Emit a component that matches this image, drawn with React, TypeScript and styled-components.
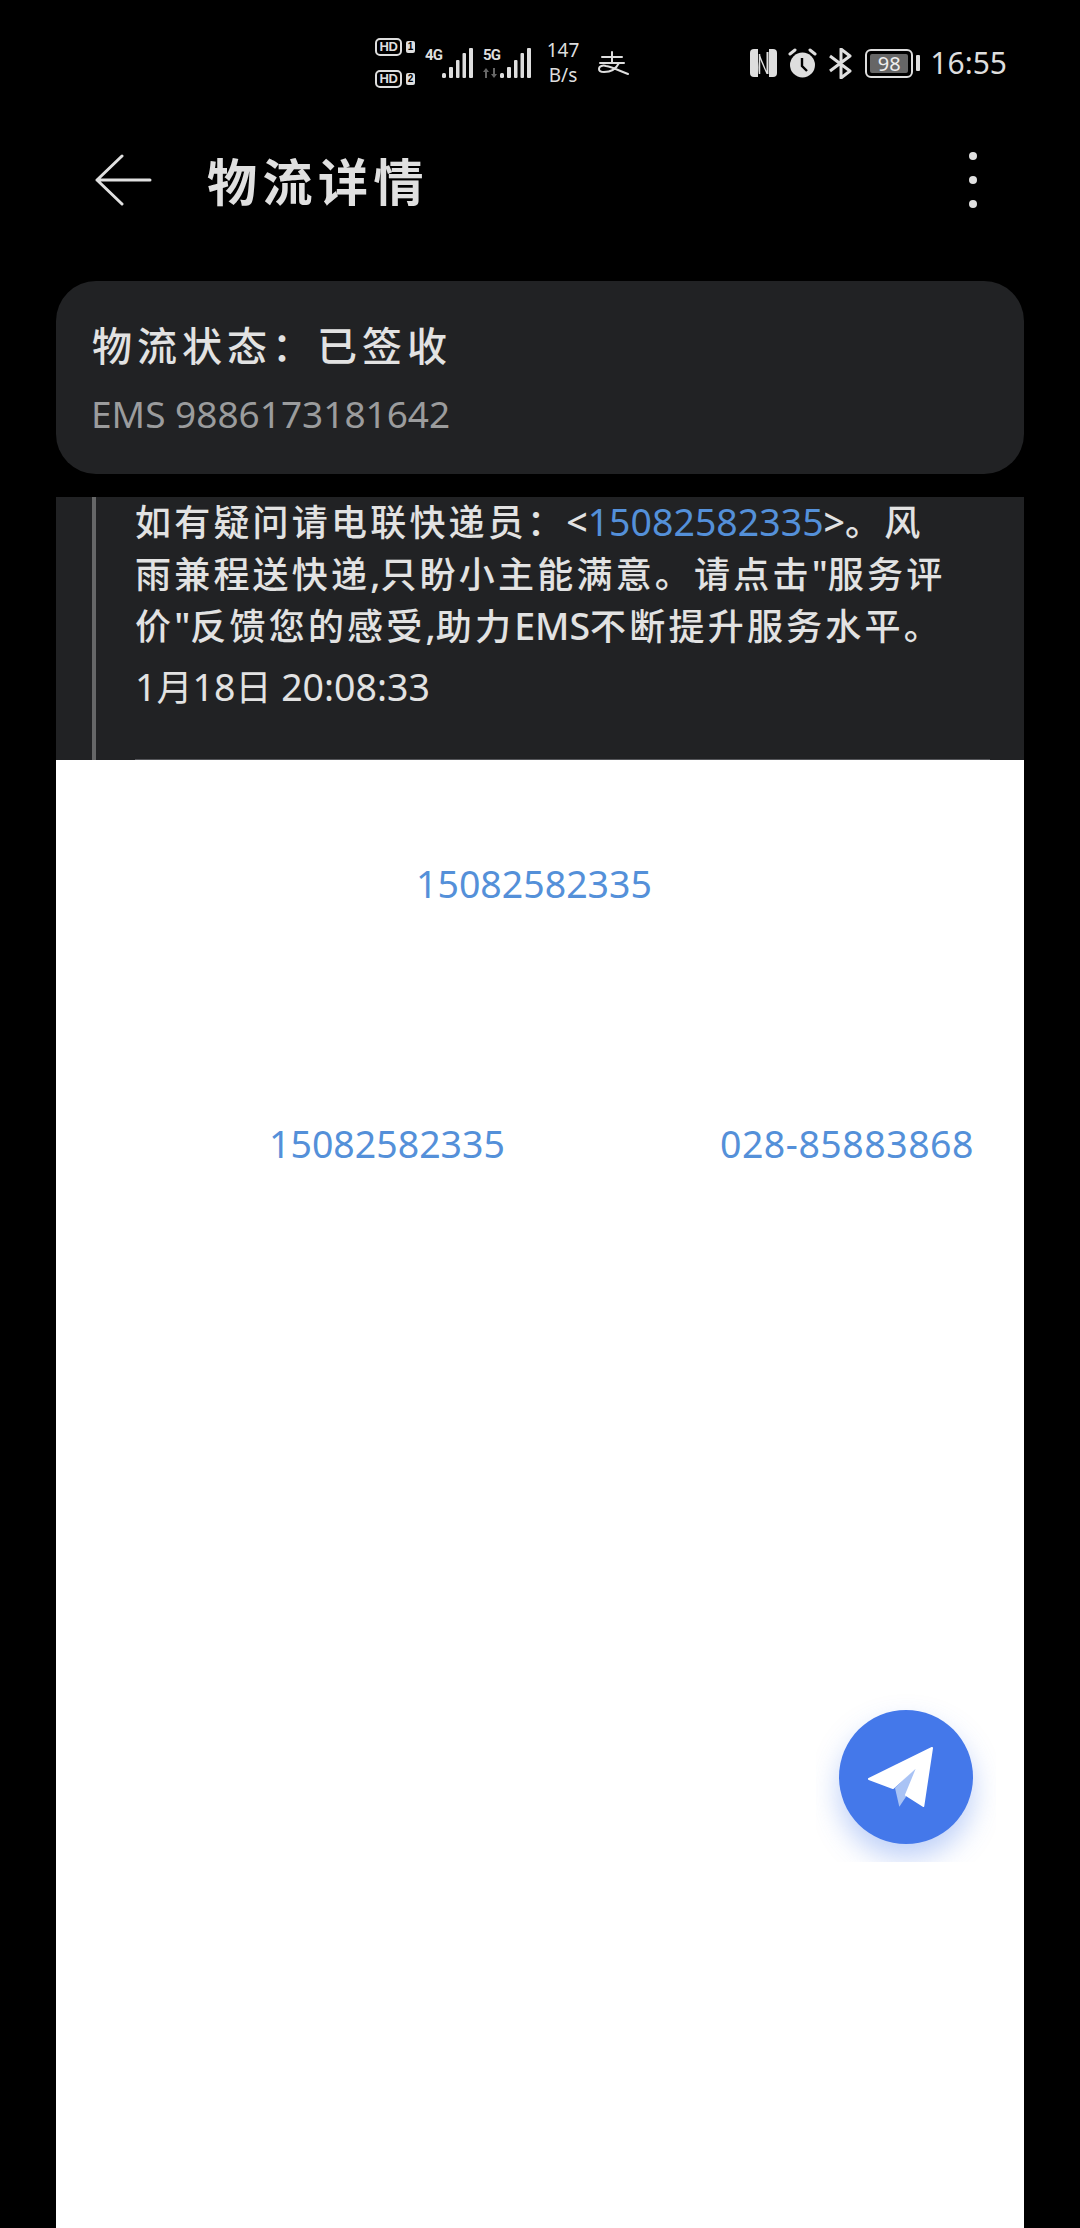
import * as React from 'react';
import styled, { createGlobalStyle } from 'styled-components';

const GlobalStyle = createGlobalStyle`
  html, body {
    margin: 0;
    padding: 0;
    background: #000;
  }
  body {
    font-family: "Noto Sans", "Noto Sans CJK SC", sans-serif;
  }
`;

const Page = styled.div`
  width: 1080px;
  height: 2228px;
  background: #000;
  overflow: hidden;
  display: flex;
  flex-direction: column;
`;

/* status bar */
const StatusBar = styled.div`
  height: 50px;
  margin-top: 38px;
  padding: 0 73px 0 375px;
  display: flex;
  align-items: center;
  color: #dedede;
`;

const SimStack = styled.div`
  display: flex;
  flex-direction: column;
  gap: 14px;
  margin-right: 10px;
`;

const SimRow = styled.div`
  display: flex;
  align-items: center;
  gap: 4px;
`;

const HdBadge = styled.span`
  box-sizing: border-box;
  width: 27px;
  height: 18px;
  border: 2px solid #dedede;
  border-radius: 5px;
  font: 700 13px/14px "Liberation Sans", sans-serif;
  letter-spacing: -0.3px;
  text-align: center;
`;

const SimNumber = styled.span`
  width: 9px;
  height: 12px;
  border-radius: 2px;
  background: #dedede;
  color: #000;
  font: 700 10px/12px "Liberation Sans", sans-serif;
  text-align: center;
`;

const Network = styled.div`
  display: flex;
  height: 30px;
  margin-right: 10px;
`;

const NetworkLabel = styled.div`
  width: 17px;
  display: flex;
  flex-direction: column;
  justify-content: space-between;
  font: 700 15px/15px "Roboto", sans-serif;
  letter-spacing: -0.8px;
`;

const Speed = styled.div`
  width: 36px;
  margin: 0 17px 0 4px;
  text-align: center;
  font: 400 19px/25px "Noto Sans", sans-serif;
`;

const RightIcons = styled.div`
  margin-left: auto;
  display: flex;
  align-items: center;
  gap: 11px;
`;

const Battery = styled.div`
  display: flex;
  align-items: center;
  gap: 3px;
`;

const BatteryBody = styled.div`
  box-sizing: border-box;
  width: 48px;
  height: 29px;
  padding: 3px;
  border: 2px solid #dedede;
  border-radius: 6px;
`;

const BatteryFill = styled.div`
  height: 100%;
  background: #666;
  border-radius: 2px;
  color: #eee;
  font: 400 20px/19px "Noto Sans", sans-serif;
  text-align: center;
`;

const BatteryNub = styled.div`
  width: 4px;
  height: 16px;
  background: #dedede;
  border-radius: 1px;
`;

const Clock = styled.div`
  margin-left: -1px;
  font: 400 30px/1 "Noto Sans", sans-serif;
`;

/* title bar */
const Header = styled.div`
  height: 96px;
  margin-top: 44px;
  padding: 0 103px 0 94px;
  display: flex;
  align-items: center;
`;

const Title = styled.h1`
  margin: -2px 0 0 55px;
  color: #e0e0e0;
  font: 700 50px/1 "Noto Sans CJK SC", sans-serif;
  letter-spacing: 5.5px;
`;

const MoreButton = styled.div`
  margin-left: auto;
  display: flex;
  flex-direction: column;
  gap: 16px;
`;

const Dot = styled.span`
  width: 8px;
  height: 8px;
  border-radius: 50%;
  background: #e0e0e0;
`;

/* summary card */
const SummaryCard = styled.section`
  box-sizing: border-box;
  height: 193px;
  margin: 53px 56px 0;
  padding: 36px 36px 0;
  background: #212224;
  border-radius: 40px;
`;

const StatusLine = styled.div`
  color: #e2e2e2;
  font: 500 40px/54px "Noto Sans CJK SC", sans-serif;
  letter-spacing: 5px;
`;

const TrackingNo = styled.div`
  margin: 18px 0 0 -1px;
  color: #9b9c9d;
  font: 400 37px/50px "Noto Sans", sans-serif;
`;

/* timeline item, scrolled under the card */
const Timeline = styled.section`
  height: 263px;
  margin: 23px 56px 0;
  background: #212224;
  display: flex;
  overflow: hidden;
`;

const Rail = styled.div`
  width: 4px;
  margin-left: 36px;
  background: #666768;
`;

const TimelineBody = styled.div`
  flex: 1;
  margin: 0 34px 0 39px;
  border-bottom: 1px solid #55565a;
  color: #e2e2e2;
  font: 500 37.5px/52px "Noto Sans", "Noto Sans CJK SC", sans-serif;
`;

const Line = styled.div`
  height: 52px;
  margin-top: -1px;
  margin-bottom: 1px;
  white-space: nowrap;
`;

const Han = styled.span`
  font-size: 36px;
  letter-spacing: 3.2px;
`;

const PhoneInline = styled.span`
  color: #5490d9;
  font-weight: 400;
`;

const DateLine = styled.div`
  height: 52px;
  margin-top: 9px;
  font-weight: 400;
  white-space: nowrap;
`;

const DateHan = styled.span`
  font-size: 36px;
`;

/* white web content */
const WebArea = styled.main`
  position: relative;
  flex: 1;
  margin: 0 56px;
  padding-top: 99px;
  background: #fff;
`;

const PhoneRow = styled.div<{ $left: number; $gap?: number; $top?: number }>`
  display: flex;
  gap: ${(p) => p.$gap || 0}px;
  margin-top: ${(p) => p.$top || 0}px;
  padding-left: ${(p) => p.$left}px;
`;

const Phone = styled.span<{ $spacing?: number }>`
  color: #5490d9;
  font: 400 37.5px/50px "Noto Sans", sans-serif;
  letter-spacing: ${(p) => p.$spacing || 0}px;
`;

const FabClip = styled.div`
  position: absolute;
  top: 920px;
  right: 28px;
  width: 180px;
  height: 182px;
  padding-top: 30px;
  box-sizing: border-box;
  overflow: hidden;
  display: flex;
  justify-content: center;
`;

const Fab = styled.div`
  width: 134px;
  height: 134px;
  margin-left: -1px;
  border-radius: 50%;
  background: #4478ea;
  box-shadow: 0 14px 28px rgba(68, 120, 234, 0.35);
  display: flex;
  align-items: center;
  justify-content: center;
`;

const SignalBars = () => (
  <svg width="31" height="30" viewBox="0 0 31 30" fill="#dedede">
    <rect x="0" y="25" width="4" height="5" rx="1.5" />
    <rect x="7" y="19" width="4" height="11" rx="1" />
    <rect x="14" y="12" width="3.500" height="18" rx="1" />
    <rect x="20.500" y="5" width="3.500" height="25" rx="1" />
    <rect x="27" y="0" width="4" height="30" rx="1" />
  </svg>
);

const ArrowsIdle = () => (
  <svg width="14" height="10" viewBox="0 0 14 10" fill="#666">
    <path d="M3 0l3 4H4v6H2V4H0zM11 10L8 6h2V0h2v6h2z" />
  </svg>
);

const AlipayMark = () => (
  <svg width="31" height="24" viewBox="0 0 31 24" fill="none" stroke="#dedede" strokeWidth="2" strokeLinecap="round">
    <path d="M4 6h20M14 1v11M2 12h24" />
    <path d="M21 12c-3 6-9 9-15 9-3 0-5-1-5-3 0-3 4-4 7-3 6 1 14 5 22 8" />
  </svg>
);

const NfcIcon = () => (
  <svg width="27" height="28" viewBox="0 0 27 28">
    <rect width="27" height="28" rx="4" fill="#dedede" />
    <path d="M8 0h11v28H8z" fill="#000" />
    <path d="M4 3c5 6 5 16 4 22h-1V3zM9.500 5l7 17V3h2v22h-2L9.500 9z" fill="#dedede" />
    <path d="M9.500 5v20" stroke="#dedede" strokeWidth="1.500" />
  </svg>
);

const AlarmIcon = () => (
  <svg width="29" height="30" viewBox="0 0 29 30">
    <circle cx="14.5" cy="17" r="12.5" fill="#dedede" />
    <path d="M14 10v8l5 5" fill="none" stroke="#000" strokeWidth="2.400" />
    <path d="M2 6l5-4M27 6l-5-4" stroke="#dedede" strokeWidth="3" strokeLinecap="round" />
  </svg>
);

const BluetoothIcon = () => (
  <svg width="26" height="31" viewBox="0 0 26 31" fill="none" stroke="#dedede" strokeWidth="3" strokeLinejoin="round">
    <path d="M2 8l20 15-9 7V1l9 7L2 23" />
  </svg>
);

const BackArrow = () => (
  <svg width="58" height="52" viewBox="0 0 58 52" fill="none" stroke="#e0e0e0" strokeWidth="3" strokeLinecap="round" strokeLinejoin="round">
    <path d="M56 26H3M28 2L3 26l25 24" />
  </svg>
);

const PlaneIcon = () => (
  <svg width="80" height="66" viewBox="0 0 80 66">
    <path d="M29 44l4.300 18.700L40 52.700 52.300 21z" fill="#a9c3f5" />
    <path
      d="M66 4L3 35l24 9 25.300-23L40 51l17.300 11z"
      fill="#fff"
      stroke="#fff"
      strokeWidth="2"
      strokeLinejoin="round"
    />
  </svg>
);

export default function App() {
  return (
    <Page>
      <GlobalStyle />
      <StatusBar>
        <SimStack>
          <SimRow>
            <HdBadge>HD</HdBadge>
            <SimNumber>1</SimNumber>
          </SimRow>
          <SimRow>
            <HdBadge>HD</HdBadge>
            <SimNumber>2</SimNumber>
          </SimRow>
        </SimStack>
        <Network>
          <NetworkLabel>
            <span>4G</span>
          </NetworkLabel>
          <SignalBars />
        </Network>
        <Network>
          <NetworkLabel>
            <span>5G</span>
            <ArrowsIdle />
          </NetworkLabel>
          <SignalBars />
        </Network>
        <Speed>
          147
          <br />
          B/s
        </Speed>
        <AlipayMark />
        <RightIcons>
          <NfcIcon />
          <AlarmIcon />
          <BluetoothIcon />
          <Battery>
            <BatteryBody>
              <BatteryFill>98</BatteryFill>
            </BatteryBody>
            <BatteryNub />
          </Battery>
          <Clock>16:55</Clock>
        </RightIcons>
      </StatusBar>

      <Header>
        <BackArrow />
        <Title>物流详情</Title>
        <MoreButton>
          <Dot />
          <Dot />
          <Dot />
        </MoreButton>
      </Header>

      <SummaryCard>
        <StatusLine>物流状态：已签收</StatusLine>
        <TrackingNo>EMS 9886173181642</TrackingNo>
      </SummaryCard>

      <Timeline>
        <Rail />
        <TimelineBody>
          <Line>
            <Han>如有疑问请电联快递员：</Han>&lt;<PhoneInline>15082582335</PhoneInline>&gt;<Han>。风</Han>
          </Line>
          <Line>
            <Han>雨兼程送快递</Han>,<Han>只盼小主能满意。请点击</Han>"<Han>服务评</Han>
          </Line>
          <Line>
            <Han>价</Han>"<Han>反馈您的感受</Han>,<Han>助力</Han>EMS<Han>不断提升服务水平。</Han>
          </Line>
          <DateLine>
            1<DateHan>月</DateHan>18<DateHan>日</DateHan> 20:08:33
          </DateLine>
        </TimelineBody>
      </Timeline>

      <WebArea>
        <PhoneRow $left={360}>
          <Phone>15082582335</Phone>
        </PhoneRow>
        <PhoneRow $left={213} $gap={215} $top={210}>
          <Phone>15082582335</Phone>
          <Phone $spacing={0.5}>028-85883868</Phone>
        </PhoneRow>
        <FabClip>
          <Fab>
            <PlaneIcon />
          </Fab>
        </FabClip>
      </WebArea>
    </Page>
  );
}
